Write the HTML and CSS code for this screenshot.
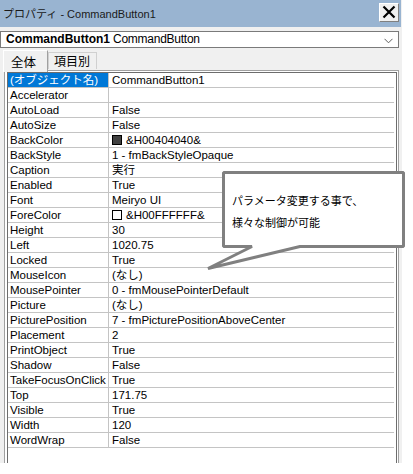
FILE: index.html
```html
<!DOCTYPE html>
<html lang="ja">
<head>
<meta charset="utf-8">
<title>プロパティ - CommandButton1</title>
<link rel="stylesheet" href="styles.css">
</head>
<body>
<div class="stage">
  <div class="window">
    <div class="titlebar">
      <span class="title">プロパティ - CommandButton1</span>
      <span class="close">
        <svg width="14" height="14" viewBox="0 0 14 14"><path d="M1.5 1.5 L12.5 12.5 M12.5 1.5 L1.5 12.5" stroke="#000" stroke-width="2.2" fill="none"/></svg>
      </span>
    </div>
    <div class="combo">
      <span class="obj-name">CommandButton1</span>
      <span class="obj-type">CommandButton</span>
      <svg class="chev" width="9" height="6" viewBox="0 0 9 6"><path d="M0.5 0.8 L4.5 4.8 L8.5 0.8" stroke="#606060" stroke-width="1" fill="none"/></svg>
    </div>
    <div class="tabs">
      <span class="tab active">全体</span>
      <span class="tab">項目別</span>
    </div>
    <div class="grid-outer">
      <div class="grid">
        <div class="row"><span class="k sel">(オブジェクト名)</span><span class="v">CommandButton1</span></div>
        <div class="row"><span class="k">Accelerator</span><span class="v"></span></div>
        <div class="row"><span class="k">AutoLoad</span><span class="v">False</span></div>
        <div class="row"><span class="k">AutoSize</span><span class="v">False</span></div>
        <div class="row"><span class="k">BackColor</span><span class="v"><i class="swatch dark"></i>&amp;H00404040&amp;</span></div>
        <div class="row"><span class="k">BackStyle</span><span class="v">1 - fmBackStyleOpaque</span></div>
        <div class="row"><span class="k">Caption</span><span class="v">実行</span></div>
        <div class="row"><span class="k">Enabled</span><span class="v">True</span></div>
        <div class="row"><span class="k">Font</span><span class="v">Meiryo UI</span></div>
        <div class="row"><span class="k">ForeColor</span><span class="v"><i class="swatch light"></i>&amp;H00FFFFFF&amp;</span></div>
        <div class="row"><span class="k">Height</span><span class="v">30</span></div>
        <div class="row"><span class="k">Left</span><span class="v">1020.75</span></div>
        <div class="row"><span class="k">Locked</span><span class="v">True</span></div>
        <div class="row"><span class="k">MouseIcon</span><span class="v">(なし)</span></div>
        <div class="row"><span class="k">MousePointer</span><span class="v">0 - fmMousePointerDefault</span></div>
        <div class="row"><span class="k">Picture</span><span class="v">(なし)</span></div>
        <div class="row"><span class="k">PicturePosition</span><span class="v">7 - fmPicturePositionAboveCenter</span></div>
        <div class="row"><span class="k">Placement</span><span class="v">2</span></div>
        <div class="row"><span class="k">PrintObject</span><span class="v">True</span></div>
        <div class="row"><span class="k">Shadow</span><span class="v">False</span></div>
        <div class="row"><span class="k">TakeFocusOnClick</span><span class="v">True</span></div>
        <div class="row"><span class="k">Top</span><span class="v">171.75</span></div>
        <div class="row"><span class="k">Visible</span><span class="v">True</span></div>
        <div class="row"><span class="k">Width</span><span class="v">120</span></div>
        <div class="row"><span class="k">WordWrap</span><span class="v">False</span></div>
      </div>
    </div>
  </div>
  <svg class="callout-shape" width="413" height="474" viewBox="0 0 413 474">
    <path d="M223.5 172.5 H403.5 V246.5 H300 L208 268.5 L252 246.5 H223.5 Z" fill="#fff" stroke="#808080" stroke-width="3" stroke-linejoin="bevel"/>
  </svg>
  <div class="callout-text">パラメータ変更する事で、<br>様々な制御が可能</div>
</div>
</body>
</html>
```

FILE: styles.css
```css
html, body {
  margin: 0;
  padding: 0;
  background: #ffffff;
}

.stage {
  position: relative;
  width: 413px;
  height: 474px;
  overflow: hidden;
}

.window {
  width: 402px;
  height: 463px;
  background: #f0f0f0;
  display: flex;
  flex-direction: column;
  font-family: "Liberation Sans", "Noto Sans CJK JP", sans-serif;
  color: #000;
}

.titlebar {
  width: 401px;
  height: 27px;
  background: #99b4d1;
  display: flex;
  align-items: center;
  box-sizing: border-box;
  padding-left: 3px;
}

.title {
  font-size: 11px;
  color: #1a1a1a;
  margin-top: -2px;
}

.close {
  margin-left: auto;
  margin-right: 2px;
  margin-top: -3px;
  width: 20px;
  height: 19px;
  box-sizing: border-box;
  background: #f0f0f0;
  border-top: 1px solid #ffffff;
  border-left: 1px solid #ffffff;
  border-right: 1px solid #808080;
  border-bottom: 1px solid #808080;
  display: flex;
  align-items: center;
  justify-content: center;
}

.combo {
  margin-top: 4px;
  width: 399px;
  height: 17px;
  box-sizing: border-box;
  background: #fff;
  border: 1px solid #7a7a7a;
  display: flex;
  align-items: baseline;
  padding-left: 5px;
  font-size: 12px;
  line-height: 15px;
}

.obj-name {
  font-weight: bold;
  margin-right: 3px;
}

.obj-type {
  letter-spacing: -0.25px;
}

.chev {
  margin-left: auto;
  margin-right: 5px;
  align-self: center;
  margin-top: 2px;
}

.tabs {
  height: 22px;
  display: flex;
  align-items: flex-end;
  padding-left: 3px;
  position: relative;
  z-index: 1;
}

.tab {
  box-sizing: border-box;
  height: 17px;
  padding: 0 6px 0 5px;
  font-family: "Noto Sans CJK JP", sans-serif;
  font-size: 12px;
  line-height: 16px;
  border: 1px solid #d0d0d0;
  border-bottom: none;
  margin-bottom: 1px;
}

.tab.active {
  height: 22px;
  width: 45px;
  padding: 0 0 0 7px;
  font-size: 12.5px;
  line-height: 21px;
  background: #f0f0f0;
  border-top: 1px solid #ffffff;
  border-left: 1px solid #ffffff;
  border-right: 1px solid #a0a0a0;
  margin-bottom: -2px;
}

.grid-outer {
  margin-left: 4px;
  width: 395px;
  flex: 1;
  box-sizing: border-box;
  border: 1px solid #a0a0a0;
  border-bottom: none;
  background: #fff;
  padding: 1px 1px 0 2px;
  display: flex;
}

.grid {
  flex: 1;
  border: 1px solid #6d6d6d;
  border-bottom: none;
  padding-right: 2px;
  background: #fff;
}

.row {
  display: flex;
  height: 15px;
  box-sizing: border-box;
  border-bottom: 1px solid #c4c4c4;
  font-size: 11.5px;
  line-height: 14px;
  white-space: nowrap;
}

.k {
  width: 101px;
  box-sizing: border-box;
  padding-left: 2px;
  border-right: 1px solid #c4c4c4;
  overflow: hidden;
}

.k.sel {
  background: #0078d7;
  color: #fff;
}

.v {
  padding-left: 3px;
  flex: 1;
  display: flex;
  align-items: center;
}

.swatch {
  display: inline-block;
  width: 10px;
  height: 10px;
  box-sizing: border-box;
  border: 1px solid #000;
  margin-right: 4px;
}

.swatch.dark {
  background: #404040;
}

.swatch.light {
  background: #ffffff;
}

.callout-shape {
  position: absolute;
  left: 0;
  top: 0;
  pointer-events: none;
}

.callout-text {
  position: absolute;
  left: 232px;
  top: 189px;
  font-family: "Noto Sans CJK JP", sans-serif;
  font-size: 11px;
  line-height: 22px;
  color: #000;
}
```
